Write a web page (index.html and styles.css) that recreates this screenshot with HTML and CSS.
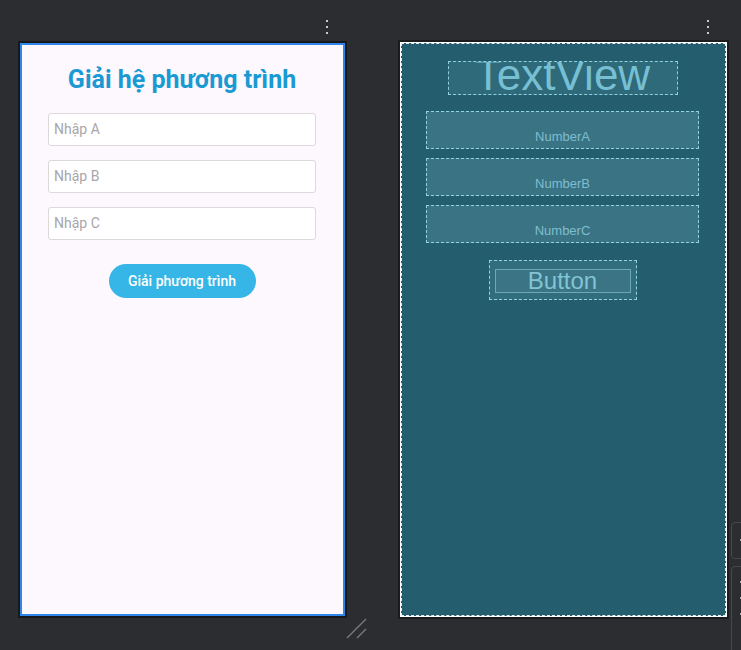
FILE: index.html
```html
<!DOCTYPE html>
<html lang="vi">
<head>
<meta charset="utf-8">
<title>Layout editor</title>
<link rel="stylesheet" href="styles.css">
</head>
<body>
<div class="canvas">
  <section class="col">
    <div class="toolbar"><span class="kebab"><i></i><i></i><i></i></span></div>
    <div class="phone design">
      <h1 class="title">Giải hệ phương trình</h1>
      <div class="field">Nhập A</div>
      <div class="field">Nhập B</div>
      <div class="field">Nhập C</div>
      <button class="solve">Giải phương trình</button>
    </div>
    <div class="resize"><svg width="24" height="24" viewBox="0 0 24 24"><path d="M1 21 L20 2 M11 21 L20 12" stroke="#7b7c80" stroke-width="1.3" fill="none"/></svg></div>
  </section>
  <section class="col">
    <div class="toolbar"><span class="kebab"><i></i><i></i><i></i></span></div>
    <div class="phone blueprint">
      <div class="bp-title"><span>TextView</span></div>
      <div class="bp-field">NumberA</div>
      <div class="bp-field">NumberB</div>
      <div class="bp-field">NumberC</div>
      <div class="bp-button"><span>Button</span></div>
    </div>
  </section>
</div>
<div class="side">
  <div class="side-box small"><i></i></div>
  <div class="side-box tall"><i></i><i></i><i></i></div>
</div>
</body>
</html>
```
FILE: styles.css
```css
html, body {
  margin: 0;
  padding: 0;
  background: #2b2d30;
  width: 741px;
  height: 650px;
  overflow: hidden;
  font-family: Roboto, "Liberation Sans", sans-serif;
}
.canvas {
  display: flex;
  gap: 56px;
  padding: 16px 0 0 20px;
}
.col {
  position: relative;
  width: 325px;
  display: flex;
  flex-direction: column;
}
.toolbar {
  height: 27px;
  display: flex;
  justify-content: flex-end;
  align-items: flex-start;
  padding-right: 17px;
}
.kebab {
  display: flex;
  flex-direction: column;
  gap: 4px;
  padding-top: 4px;
}
.kebab i {
  display: block;
  width: 2px;
  height: 2px;
  background: #c9cacd;
}
.phone {
  height: 573px;
  box-sizing: border-box;
}
.design {
  background: #fdf7fe;
  border: 2px solid #2e86ea;
  box-shadow: 0 0 0 2px #18191b;
  display: flex;
  flex-direction: column;
  align-items: stretch;
  padding: 0 27px 0 26px;
}
.title {
  margin: 20px 0 0;
  text-align: center;
  font-size: 25px;
  font-weight: 700;
  color: #1a9ad3;
  line-height: 30px;
  height: 30px;
  white-space: nowrap;
}
.field {
  margin-top: 14px;
  height: 33px;
  box-sizing: border-box;
  background: #ffffff;
  border: 1px solid #dcd8dc;
  border-radius: 3px;
  color: #a8a6aa;
  font-size: 14px;
  line-height: 31px;
  padding-left: 5px;
}
.field:first-of-type { margin-top: 18px; }
.solve {
  align-self: center;
  margin-top: 24px;
  width: 147px;
  height: 34px;
  border: none;
  border-radius: 17px;
  background: #36b6e6;
  color: #ffffff;
  font-family: Roboto, "Liberation Sans", sans-serif;
  font-size: 14px;
  font-weight: 500;
  padding: 0;
}
.resize {
  position: absolute;
  left: 326px;
  top: 601px;
  width: 24px;
  height: 24px;
}
.blueprint {
  background: #245d6d;
  border: 1px dashed #e6eef0;
  box-shadow: 0 0 0 1px #ffffff, 0 0 0 3px #1b1c1e;
  display: flex;
  flex-direction: column;
  align-items: stretch;
  padding: 0 26px 0 24px;
  font-family: "Liberation Sans", Arial, sans-serif;
  color: #7dc1d3;
}
.bp-title {
  align-self: center;
  margin-top: 17px;
  width: 230px;
  height: 34px;
  box-sizing: border-box;
  border: 1px dashed #8dd0e2;
  background: #2e6a7a;
  overflow: hidden;
  text-align: center;
}
.bp-title span {
  display: block;
  font-size: 44px;
  line-height: 44px;
  margin-top: -9px;
  color: #77bfd2;
  white-space: nowrap;
}
.bp-field {
  height: 38px;
  box-sizing: border-box;
  border: 1px dashed #8fd3e4;
  background: #3a7484;
  text-align: center;
  font-size: 13px;
  line-height: 14px;
  padding-top: 18px;
  margin-top: 9px;
  color: #7fbdce;
}
.bp-field:nth-child(2) { margin-top: 16px; }
.bp-button {
  align-self: center;
  margin-top: 17px;
  width: 148px;
  height: 40px;
  box-sizing: border-box;
  border: 1px dashed #8fd3e4;
  background: #316d7d;
  display: flex;
  align-items: center;
  justify-content: center;
}
.bp-button span {
  width: 136px;
  height: 24px;
  box-sizing: border-box;
  border: 1px solid #6aa9b9;
  background: #3b7585;
  text-align: center;
  font-size: 24px;
  line-height: 22px;
  color: #80c4d6;
  margin-top: 2px;
}
.side {
  position: absolute;
  left: 731px;
  top: 522px;
  display: flex;
  flex-direction: column;
  gap: 7px;
}
.side-box {
  width: 20px;
  border: 1px solid #46484c;
  border-radius: 4px;
}
.side-box.small { height: 35px; }
.side-box.tall { height: 100px; }
.side-box i {
  display: block;
  width: 2px;
  height: 2px;
  background: #a5a6a9;
  margin: 16px 0 0 8px;
}
.side-box.tall i { margin-top: 14px; margin-bottom: 14px; }
```
